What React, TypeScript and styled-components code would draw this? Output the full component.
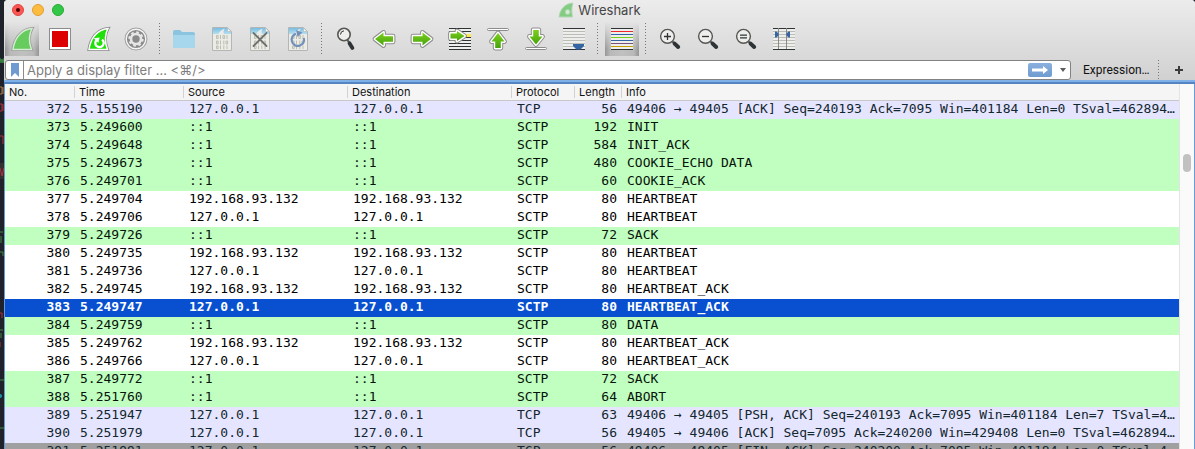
import React from "react";
import styled, { createGlobalStyle, css } from "styled-components";

const GlobalStyle = createGlobalStyle`
  * { box-sizing: border-box; }
  html, body, #root { height: 100%; margin: 0; }
  body { overflow: hidden; background: #20222b; }
  button, input { font: inherit; color: inherit; margin: 0; padding: 0; border: 0; background: none; }
`;

const uiFont = `Inter, "Liberation Sans", sans-serif`;
const monoFont = `"DejaVu Sans Mono", "Liberation Mono", monospace`;

const Desktop = styled.div`
  display: flex;
  height: 100%;
`;

const EditorEdge = styled.svg`
  flex: none;
  width: 4px;
  height: 449px;
`;

const Window = styled.main`
  flex: 1;
  min-width: 0;
  display: flex;
  flex-direction: column;
  overflow: hidden;
  border-top-left-radius: 4px;
  border-top-right-radius: 4px;
  background: #ffffff;
  font-family: ${uiFont};
`;

const Chrome = styled.header`
  flex: none;
  background: linear-gradient(#ececec, #d1d1d1);
`;

const TitleBar = styled.div`
  display: grid;
  grid-template-columns: 1fr auto 1fr;
  align-items: center;
  height: 20px;
  padding: 0 8px;
`;

const Lights = styled.div`
  display: flex;
  gap: 8px;
`;

const Light = styled.button<{ $fill: string; $edge: string }>`
  display: grid;
  place-items: center;
  width: 12px;
  height: 12px;
  border: 1px solid ${(p) => p.$edge};
  border-radius: 50%;
  background: ${(p) => p.$fill};
`;

const UnsavedDot = styled.span`
  width: 4px;
  height: 4px;
  border-radius: 50%;
  background: #4d0000;
`;

const Title = styled.h1`
  display: flex;
  align-items: center;
  gap: 4px;
  margin: 0;
  font-size: 13px;
  line-height: 20px;
  font-weight: 400;
  color: #454545;
`;

const Toolbar = styled.div`
  display: flex;
  align-items: center;
  gap: 4px;
  height: 40px;
  padding: 0 1px 2px;
`;

const ToolButton = styled.button<{ $pressed?: boolean }>`
  flex: none;
  width: 34px;
  height: 34px;
  ${(p) =>
    p.$pressed &&
    css`
      background:
        linear-gradient(#e4e4e4, #e4e4e400 80%),
        linear-gradient(90deg, #969696, #b9b9b9 16%, #c0c0c0 50%, #b9b9b9 84%, #969696);
    `}
  svg { display: block; }
`;

const Divider = styled.span<{ $height: number }>`
  flex: none;
  width: 6px;
  height: ${(p) => p.$height}px;
  padding-left: 2px;
  &::before {
    content: "";
    display: block;
    width: 1px;
    height: 100%;
    background: repeating-linear-gradient(#777 0 1px, transparent 1px 3px);
  }
`;

const FilterBar = styled.form`
  display: flex;
  align-items: center;
  height: 20px;
  padding-left: 1px;
`;

const FilterField = styled.div`
  flex: 1;
  display: flex;
  align-items: center;
  height: 20px;
  border: 1px solid #828282;
  border-radius: 3px;
  background: #ffffff;
`;

const BookmarkButton = styled.button`
  display: grid;
  place-items: center;
  width: 18px;
  height: 18px;
  border-right: 1px solid #8c8c8c;
`;

const FilterInput = styled.input`
  flex: 1;
  min-width: 0;
  height: 18px;
  padding-left: 3px;
  font-size: 13px;
  outline: none;
  &::placeholder { color: #7d7d7d; opacity: 1; }
`;

const ApplyButton = styled.button`
  width: 24px;
  height: 14px;
  margin-right: 7px;
  border-radius: 2px;
  background: linear-gradient(#8ab0dd, #6f9bd0);
  svg { display: block; }
`;

const HistoryButton = styled.button`
  width: 8px;
  height: 18px;
  margin-right: 3px;
  svg { display: block; }
`;

const ExpressionButton = styled.button`
  width: 85px;
  padding-left: 12px;
  text-align: left;
  font-family: Roboto, ${uiFont};
  font-size: 12px;
  line-height: 20px;
  color: #111;
`;

const AddButton = styled.button`
  display: grid;
  place-items: center;
  width: 33px;
  height: 20px;
`;

const PacketPane = styled.section`
  flex: 1;
  min-height: 0;
  display: flex;
  overflow: hidden;
  border: 1px solid #6a9ad6;
  border-width: 0 1px;
`;

const FocusBar = styled.div`
  flex: none;
  height: 4px;
  border-bottom: 2px solid #5485c2;
  background: #7fb0e8;
`;

const Packets = styled.table`
  flex: 1;
  width: 0;
  table-layout: fixed;
  border-spacing: 0;
  align-self: flex-start;
`;

const HeadCell = styled.th<{ $width?: number }>`
  width: ${(p) => (p.$width ? `${p.$width}px` : "auto")};
  height: 17px;
  padding: 0;
  border-bottom: 1px solid #c8c8c8;
  background: #f5f5f5;
  text-align: left;
  font-size: 11px;
  line-height: 16px;
  font-weight: 400;
  color: #111;
`;

const HeadLabel = styled.span<{ $last?: boolean }>`
  display: block;
  height: 12px;
  padding-left: 4px;
  border-right: ${(p) => (p.$last ? "0" : "1px solid #d2d2d2")};
  line-height: 12px;
`;

type Tone = "tcp" | "sctp" | "plain" | "selected" | "closing";

const tones: Record<Tone, [string, string]> = {
  tcp: ["#e6e5ff", "#12272e"],
  sctp: ["#c1ffc0", "#06140a"],
  plain: ["#ffffff", "#000000"],
  selected: ["#0850d0", "#ffffff"],
  closing: ["#a0a0a0", "#12272e"],
};

const Row = styled.tr<{ $tone: Tone }>`
  background: ${(p) => tones[p.$tone][0]};
  color: ${(p) => tones[p.$tone][1]};
  font-weight: ${(p) => (p.$tone === "selected" ? 700 : 400)};
`;

const Cell = styled.td<{ $right?: boolean }>`
  height: 18px;
  padding: 0 5px;
  overflow: hidden;
  white-space: nowrap;
  text-align: ${(p) => (p.$right ? "right" : "left")};
  font-family: ${monoFont};
  font-size: 13px;
  line-height: 16px;
  vertical-align: top;
`;

const ScrollTrack = styled.div`
  flex: none;
  width: 15px;
  padding: 70px 3px 0;
  border-left: 1px solid #e4e4e4;
  background: #fafafa;
`;

const ScrollThumb = styled.div`
  width: 8px;
  height: 18px;
  border-radius: 4px;
  background: #c1c1c1;
`;

const FIN = "M8 27.5C9.5 16.5 16 7.5 27 6.5C23.5 13 24 21 26.5 27.5Z";

function Icon({ children }: { children: React.ReactNode }) {
  return (
    <svg width="34" height="34" viewBox="0 0 34 34" fill="none" aria-hidden="true">
      {children}
    </svg>
  );
}

function GreenArrow({ d }: { d: string }) {
  return (
    <>
      <path d={d} stroke="#8c8c8c" strokeWidth="4.8" strokeLinejoin="round" />
      <path d={d} fill="#fff" stroke="#fff" strokeWidth="2.8" strokeLinejoin="round" />
      <path d={d} fill="url(#leaf)" />
    </>
  );
}

const Gradients = () => (
  <defs>
    <linearGradient id="leaf" x1="0" y1="0" x2="0" y2="1">
      <stop offset="0" stopColor="#7cd01c" />
      <stop offset="1" stopColor="#47a30d" />
    </linearGradient>
    <linearGradient id="sky" x1="0" y1="0" x2="0" y2="1">
      <stop offset="0" stopColor="#78bde2" />
      <stop offset="1" stopColor="#b4dff2" />
    </linearGradient>
  </defs>
);

function CapturePage({ children }: { children?: React.ReactNode }) {
  return (
    <Icon>
      <path d="M7.5 5.5H22.5L26.5 9.5V28.5H7.5Z" fill="#ecece6" stroke="#b2b6b4" />
      <path d="M8 6H22.3L26 9.7V12H19C18 10 18.5 8 20 6.5C16.5 7.5 14.5 9.5 13.5 12H8Z" fill="url(#sky)" />
      <path d="M22.5 6V9.5H26Z" fill="#fff" stroke="#b2b6b4" strokeWidth="0.6" />
      <g stroke="#bcbeb2" strokeWidth="1">
        <path d="M11.5 13.5h1.6v3h-1.6zM18 13.5h1.6v3H18zM15.5 13v4M22 13v4" />
        <path d="M11.5 19h1.6v3h-1.6zM21 19h1.6v3H21zM15.5 18.5v4M18.8 18.5v4" />
        <path d="M11.5 24h1.6v2.6h-1.6zM15.5 23.5v3.6M18.8 23.5v3.6M22 23.5v3.6" />
      </g>
      {children}
    </Icon>
  );
}

const RIGHT_ARROW = "M8 14.2H17.5V10.5L26 17L17.5 23.5V19.8H8Z";
const LEFT_ARROW = "M26 14.2H16.5V10.5L8 17L16.5 23.5V19.8H26Z";

function Magnifier({ sign }: { sign: string }) {
  return (
    <Icon>
      <path d="M19.5 19.5L21.5 21.5" stroke="#555753" strokeWidth="2" />
      <path d="M21.6 21.6L25.2 25" stroke="#2e3436" strokeWidth="4" strokeLinecap="round" />
      <circle cx="14.5" cy="14.3" r="6.9" fill="#eeeeec" stroke="#555753" strokeWidth="1.4" />
      <path d={sign} stroke="#2e3436" strokeWidth="1.3" />
    </Icon>
  );
}

function Lines({ colors }: { colors: string[] }) {
  return (
    <>
      <rect x="6" y="6" width="22" height="22" fill="#eeeeec" />
      {colors.map((color, i) => (
        <rect key={i} x="6" y={6 + i * 3} width="22" height="1" fill={color} />
      ))}
    </>
  );
}

const dark = "#2e3436";
const pale = "#babdb6";

type Tool = { label: string; icon: React.ReactNode; pressed?: boolean } | null;

const tools: Tool[] = [
  {
    label: "Start capturing packets",
    pressed: true,
    icon: (
      <Icon>
        <Gradients />
        <path d={FIN} stroke="#9a9d9a" strokeWidth="3" />
        <path d={FIN} fill="#66cc5e" stroke="#d5ecd2" strokeWidth="1.4" />
      </Icon>
    ),
  },
  {
    label: "Stop capturing packets",
    icon: (
      <Icon>
        <rect x="6.5" y="6.5" width="21" height="21" fill="#fff" stroke="#8c8c8c" />
        <rect x="9" y="9" width="16" height="16" fill="#dc0000" />
      </Icon>
    ),
  },
  {
    label: "Restart current capture",
    icon: (
      <Icon>
        <path d={FIN} stroke="#858585" strokeWidth="3" />
        <path d={FIN} fill="#21df08" stroke="#fff" strokeWidth="1.5" />
        <path d="M15.4 18.2A4.2 4.2 0 1 0 21 17.6" stroke="#fff" strokeWidth="2.3" />
        <path d="M12.8 16.3L18.6 15.4L17.4 21Z" fill="#fff" />
      </Icon>
    ),
  },
  {
    label: "Capture options",
    icon: (
      <Icon>
        <circle cx="17" cy="17" r="11" fill="#8c8c8c" stroke="#a2a2a2" />
        <circle cx="17" cy="17" r="9.8" fill="#8a8a8a" stroke="#f4f4f4" strokeWidth="1.4" />
        <circle cx="17" cy="17" r="5" stroke="#e6e6e6" strokeWidth="2.6" />
        <circle cx="17" cy="17" r="6.8" stroke="#e6e6e6" strokeWidth="1.8" strokeDasharray="2.8 2.54" />
      </Icon>
    ),
  },
  null,
  {
    label: "Open a capture file",
    icon: (
      <Icon>
        <path d="M6 10Q6 8 8 8H13L15 10H26Q28 10 28 12V24Q28 26 26 26H8Q6 26 6 24Z" fill="#8bc4de" />
        <path d="M6 13H28V24Q28 26 26 26H8Q6 26 6 24Z" fill="#a6d7ed" />
      </Icon>
    ),
  },
  { label: "Save this capture file", icon: <CapturePage /> },
  {
    label: "Close this capture file",
    icon: (
      <CapturePage>
        <path d="M10.5 11L23.5 24M23.5 11L10.5 24" stroke="#6f716d" strokeWidth="1.8" strokeLinecap="round" />
      </CapturePage>
    ),
  },
  {
    label: "Reload this file",
    icon: (
      <CapturePage>
        <path d="M15 11.8A6.2 6.2 0 1 0 22.8 16" stroke="#7390bd" strokeWidth="2.2" />
        <path d="M15 8L21.5 10.5L16.5 15Z" fill="#7390bd" />
      </CapturePage>
    ),
  },
  null,
  {
    label: "Find a packet",
    icon: (
      <Icon>
        <path d="M18.5 18L20 20.5" stroke="#555753" strokeWidth="2" />
        <path d="M20.5 21.3L23.4 26" stroke="#2e3436" strokeWidth="3.8" strokeLinecap="round" />
        <circle cx="15" cy="12.5" r="6.2" fill="#eeeeec" stroke="#555753" strokeWidth="1.6" />
        <path d="M11.5 12.5A3.8 3.8 0 0 1 15 8.8" stroke="#2e3436" strokeWidth="1" />
      </Icon>
    ),
  },
  { label: "Go back", icon: <Icon><GreenArrow d={LEFT_ARROW} /></Icon> },
  { label: "Go forward", icon: <Icon><GreenArrow d={RIGHT_ARROW} /></Icon> },
  {
    label: "Go to packet",
    icon: (
      <Icon>
        <Lines colors={[dark, dark, dark, dark, dark, dark, dark, dark]} />
        <rect x="22" y="12" width="6" height="3" fill="#fce94f" />
        <GreenArrow d="M7.5 11.5H14V9L21.5 14L14 19V16.5H7.5Z" />
      </Icon>
    ),
  },
  {
    label: "Go to first packet",
    icon: (
      <Icon>
        <rect x="6.5" y="6.5" width="21" height="2" rx="1" fill="#fff" stroke="#8c8c8c" />
        <GreenArrow d="M14.2 26V19.5H10.5L17 11L23.5 19.5H19.8V26Z" />
      </Icon>
    ),
  },
  {
    label: "Go to last packet",
    icon: (
      <Icon>
        <rect x="6.5" y="25.5" width="21" height="2" rx="1" fill="#fff" stroke="#8c8c8c" />
        <GreenArrow d="M14.2 8V14.5H10.5L17 22.5L23.5 14.5H19.8V8Z" />
      </Icon>
    ),
  },
  {
    label: "Auto scroll",
    icon: (
      <Icon>
        <Lines colors={[dark, pale, pale, pale, pale, pale, pale, dark]} />
        <path d="M16 22H27V24L23.5 27.5H19.5L16 24Z" fill="#3465a4" />
      </Icon>
    ),
  },
  null,
  {
    label: "Colorize packets",
    pressed: true,
    icon: (
      <Icon>
        <Lines colors={[dark, "#ef2929", "#3465a4", "#73d216", "#3465a4", "#75507b", "#c4a000", dark]} />
      </Icon>
    ),
  },
  null,
  { label: "Zoom in", icon: <Magnifier sign="M11 14.5H18M14.5 11V18" /> },
  { label: "Zoom out", icon: <Magnifier sign="M11 14.5H18" /> },
  { label: "Normal size", icon: <Magnifier sign="M11 13.2H18M11 15.8H18" /> },
  {
    label: "Resize columns",
    icon: (
      <Icon>
        <Lines colors={[dark, pale, pale, pale, pale, pale, pale, dark]} />
        <path d="M11.5 6V27M19.5 6V27" stroke="#888a85" />
        <path d="M8 9.5H9.5L11.5 11.5V13.5L9.5 15.5H8ZM23 9.5H21.5L19.5 11.5V13.5L21.5 15.5H23Z" fill="#3465a4" />
      </Icon>
    ),
  },
];

const columns: [string, number?][] = [
  ["No.", 70],
  ["Time", 109],
  ["Source", 164],
  ["Destination", 164],
  ["Protocol", 63],
  ["Length", 47],
  ["Info"],
];

const loop4 = "127.0.0.1";
const loop6 = "::1";
const host = "192.168.93.132";

type Packet = [number, string, string, string, number, string, Tone];

const packets: Packet[] = [
  [372, "5.155190", loop4, "TCP", 56, "49406 → 49405 [ACK] Seq=240193 Ack=7095 Win=401184 Len=0 TSval=462894…", "tcp"],
  [373, "5.249600", loop6, "SCTP", 192, "INIT", "sctp"],
  [374, "5.249648", loop6, "SCTP", 584, "INIT_ACK", "sctp"],
  [375, "5.249673", loop6, "SCTP", 480, "COOKIE_ECHO DATA", "sctp"],
  [376, "5.249701", loop6, "SCTP", 60, "COOKIE_ACK", "sctp"],
  [377, "5.249704", host, "SCTP", 80, "HEARTBEAT", "plain"],
  [378, "5.249706", loop4, "SCTP", 80, "HEARTBEAT", "plain"],
  [379, "5.249726", loop6, "SCTP", 72, "SACK", "sctp"],
  [380, "5.249735", host, "SCTP", 80, "HEARTBEAT", "plain"],
  [381, "5.249736", loop4, "SCTP", 80, "HEARTBEAT", "plain"],
  [382, "5.249745", host, "SCTP", 80, "HEARTBEAT_ACK", "plain"],
  [383, "5.249747", loop4, "SCTP", 80, "HEARTBEAT_ACK", "selected"],
  [384, "5.249759", loop6, "SCTP", 80, "DATA", "sctp"],
  [385, "5.249762", host, "SCTP", 80, "HEARTBEAT_ACK", "plain"],
  [386, "5.249766", loop4, "SCTP", 80, "HEARTBEAT_ACK", "plain"],
  [387, "5.249772", loop6, "SCTP", 72, "SACK", "sctp"],
  [388, "5.251760", loop6, "SCTP", 64, "ABORT", "sctp"],
  [389, "5.251947", loop4, "TCP", 63, "49406 → 49405 [PSH, ACK] Seq=240193 Ack=7095 Win=401184 Len=7 TSval=4…", "tcp"],
  [390, "5.251979", loop4, "TCP", 56, "49405 → 49406 [ACK] Seq=7095 Ack=240200 Win=429408 Len=0 TSval=462894…", "tcp"],
  [391, "5.251991", loop4, "TCP", 56, "49406 → 49405 [FIN, ACK] Seq=240200 Ack=7095 Win=401184 Len=0 TSval=4…", "closing"],
];

export default function App() {
  return (
    <Desktop>
      <GlobalStyle />
      <EditorEdge viewBox="0 0 4 449" aria-hidden="true">
        <rect y="163" width="4" height="16" fill="#33312f" />
        <path d="M0 58L1 63L2 59L3 63L4 58M0 232H3M1 236V243M0 252H3V256M0 330H3M1 333V338M0 380H4M0 428H4" stroke="#3f8a45" fill="none" />
        <path d="M0 87H2V94H0M3 87V94" stroke="#a87a4a" fill="none" />
        <path d="M0 104H2V111H0M3 104V111M0 136H3V144M0 168L2 176L4 168M0 313H2V318M0 342V347" stroke="#b03040" fill="none" />
        <circle cx="0" cy="396" r="2" fill="#1795a8" />
      </EditorEdge>
      <Window>
        <Chrome>
          <TitleBar>
            <Lights>
              <Light type="button" aria-label="Close" $fill="#fc5753" $edge="#df4744"><UnsavedDot /></Light>
              <Light type="button" aria-label="Minimize" $fill="#fdbc40" $edge="#de9f34" />
              <Light type="button" aria-label="Zoom window" $fill="#33c748" $edge="#27aa35" />
            </Lights>
            <Title>
              <svg width="16" height="16" viewBox="0 0 16 16" aria-hidden="true">
                <path d="M1 15C2 7 7 1.5 15 1C13.5 5 13.5 10 14.5 15Z" fill="#83cd83" stroke="#b5d6b5" />
                <circle cx="9.6" cy="10" r="2.5" fill="#d7ead7" stroke="#a7d3a7" />
              </svg>
              Wireshark
            </Title>
          </TitleBar>
          <Toolbar role="toolbar" aria-label="Main toolbar">
            {tools.map((tool, i) =>
              tool ? (
                <ToolButton key={tool.label} type="button" aria-label={tool.label} $pressed={tool.pressed}>
                  {tool.icon}
                </ToolButton>
              ) : (
                <Divider key={i} $height={32} />
              ),
            )}
          </Toolbar>
          <FilterBar onSubmit={(e) => e.preventDefault()}>
            <FilterField>
              <BookmarkButton type="button" aria-label="Filter bookmarks">
                <svg width="8" height="14" viewBox="0 0 8 14" aria-hidden="true">
                  <path d="M0 0H8V14L4 10L0 14Z" fill="#6f9bd0" />
                </svg>
              </BookmarkButton>
              <FilterInput type="text" aria-label="Display filter" placeholder="Apply a display filter … <⌘/>" />
              <ApplyButton type="submit" aria-label="Apply filter">
                <svg width="24" height="14" viewBox="0 0 24 14" aria-hidden="true">
                  <path d="M4 5.5H15V3L20 7L15 11V8.5H4Z" fill="#fff" />
                </svg>
              </ApplyButton>
              <HistoryButton type="button" aria-label="Recent filters">
                <svg width="8" height="18" viewBox="0 0 8 18" aria-hidden="true">
                  <path d="M1 7H7L4 11Z" fill="#5c5c5c" />
                </svg>
              </HistoryButton>
            </FilterField>
            <ExpressionButton type="button">Expression…</ExpressionButton>
            <Divider $height={20} />
            <AddButton type="button" aria-label="Add filter button">
              <svg width="10" height="10" viewBox="0 0 10 10" aria-hidden="true">
                <path d="M5 1V9M1 5H9" stroke="#3c3c3c" strokeWidth="2" />
              </svg>
            </AddButton>
          </FilterBar>
        </Chrome>
        <FocusBar />
        <PacketPane aria-label="Packet list">
          <Packets>
            <thead>
              <tr>
                {columns.map(([name, width]) => (
                  <HeadCell key={name} $width={width} scope="col">
                    <HeadLabel $last={!width}>{name}</HeadLabel>
                  </HeadCell>
                ))}
              </tr>
            </thead>
            <tbody>
              {packets.map(([no, time, address, protocol, length, info, tone]) => (
                <Row key={no} $tone={tone} aria-selected={tone === "selected"}>
                  <Cell $right>{no}</Cell>
                  <Cell>{time}</Cell>
                  <Cell>{address}</Cell>
                  <Cell>{address}</Cell>
                  <Cell>{protocol}</Cell>
                  <Cell $right>{length}</Cell>
                  <Cell>{info}</Cell>
                </Row>
              ))}
            </tbody>
          </Packets>
          <ScrollTrack>
            <ScrollThumb />
          </ScrollTrack>
        </PacketPane>
      </Window>
    </Desktop>
  );
}
